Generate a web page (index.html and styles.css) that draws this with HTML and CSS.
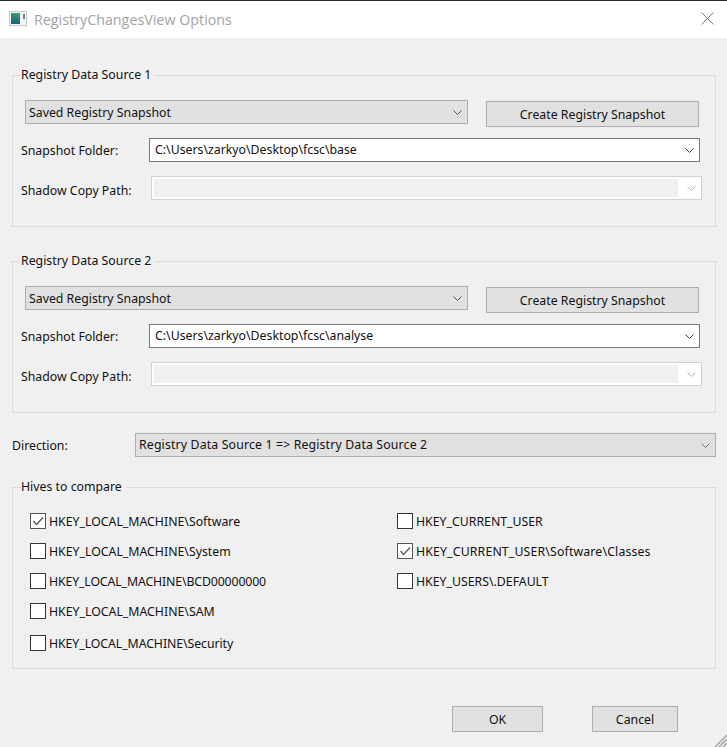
FILE: index.html
```html
<!DOCTYPE html>
<html lang="en">
<head>
<meta charset="utf-8">
<title>RegistryChangesView Options</title>
<link rel="stylesheet" href="styles.css">
</head>
<body>
<div class="dialog">
  <header class="titlebar">
    <svg class="app-icon" width="18" height="15" viewBox="0 0 18 15">
      <defs><linearGradient id="iconfill" x1="0" y1="0" x2="0" y2="1"><stop offset="0" stop-color="#3f9a70"/><stop offset="1" stop-color="#1d5f86"/></linearGradient></defs>
      <rect x="0" y="0" width="18" height="15" fill="#c4cad0"/>
      <rect x="1" y="1" width="16" height="13" fill="#f2f4f6"/>
      <rect x="2" y="2" width="9" height="11" fill="url(#iconfill)"/>
      <rect x="14" y="3" width="2" height="5" fill="#6e8296"/>
    </svg>
    <span class="title">RegistryChangesView Options</span>
    <svg class="close" width="13" height="13" viewBox="0 0 13 13"><path d="M0.5 0.5L12.5 12.5M12.5 0.5L0.5 12.5" stroke="#7a7a7a" stroke-width="1" fill="none"/></svg>
  </header>
  <main class="content">
    <fieldset class="group source">
      <legend>Registry Data Source 1</legend>
      <div class="row row-source">
        <div class="combo combo-source"><span>Saved Registry Snapshot</span><svg class="chev" width="9" height="5" viewBox="0 0 9 5"><path d="M0.5 0.5L4.5 4.5L8.5 0.5" stroke="#505050" fill="none"/></svg></div>
        <button class="btn btn-create" type="button">Create Registry Snapshot</button>
      </div>
      <div class="row row-folder">
        <label class="field-label">Snapshot Folder:</label>
        <div class="combo combo-edit"><span>C:\Users\zarkyo\Desktop\fcsc\base</span><svg class="chev" width="9" height="5" viewBox="0 0 9 5"><path d="M0.5 0.5L4.5 4.5L8.5 0.5" stroke="#404040" fill="none"/></svg></div>
      </div>
      <div class="row row-shadow">
        <label class="field-label">Shadow Copy Path:</label>
        <div class="combo combo-disabled"><span class="inner"></span><svg class="chev" width="9" height="5" viewBox="0 0 9 5"><path d="M0.5 0.5L4.5 4.5L8.5 0.5" stroke="#b4b4b4" fill="none"/></svg></div>
      </div>
    </fieldset>
    <fieldset class="group source second">
      <legend>Registry Data Source 2</legend>
      <div class="row row-source">
        <div class="combo combo-source"><span>Saved Registry Snapshot</span><svg class="chev" width="9" height="5" viewBox="0 0 9 5"><path d="M0.5 0.5L4.5 4.5L8.5 0.5" stroke="#505050" fill="none"/></svg></div>
        <button class="btn btn-create" type="button">Create Registry Snapshot</button>
      </div>
      <div class="row row-folder">
        <label class="field-label">Snapshot Folder:</label>
        <div class="combo combo-edit"><span>C:\Users\zarkyo\Desktop\fcsc\analyse</span><svg class="chev" width="9" height="5" viewBox="0 0 9 5"><path d="M0.5 0.5L4.5 4.5L8.5 0.5" stroke="#404040" fill="none"/></svg></div>
      </div>
      <div class="row row-shadow">
        <label class="field-label">Shadow Copy Path:</label>
        <div class="combo combo-disabled"><span class="inner"></span><svg class="chev" width="9" height="5" viewBox="0 0 9 5"><path d="M0.5 0.5L4.5 4.5L8.5 0.5" stroke="#b4b4b4" fill="none"/></svg></div>
      </div>
    </fieldset>
    <div class="direction">
      <label class="direction-label">Direction:</label>
      <div class="combo combo-direction"><span class="wide">Registry Data Source 1 =&gt; Registry Data Source 2</span><svg class="chev" width="9" height="5" viewBox="0 0 9 5"><path d="M0.5 0.5L4.5 4.5L8.5 0.5" stroke="#707070" fill="none"/></svg></div>
    </div>
    <fieldset class="group hives">
      <legend>Hives to compare</legend>
      <div class="hive-grid">
        <div class="hive-col col-left">
          <div class="check"><span class="box on"><svg width="14" height="14" viewBox="0 0 14 14"><path d="M2.5 7L5.5 10.5L12 3.5" stroke="#555" stroke-width="1.2" fill="none"/></svg></span>HKEY_LOCAL_MACHINE\Software</div>
          <div class="check"><span class="box"></span>HKEY_LOCAL_MACHINE\System</div>
          <div class="check narrow"><span class="box"></span>HKEY_LOCAL_MACHINE\BCD00000000</div>
          <div class="check"><span class="box"></span>HKEY_LOCAL_MACHINE\SAM</div>
          <div class="check last tight"><span class="box"></span>HKEY_LOCAL_MACHINE\Security</div>
        </div>
        <div class="hive-col col-right">
          <div class="check"><span class="box"></span>HKEY_CURRENT_USER</div>
          <div class="check wide"><span class="box on"><svg width="14" height="14" viewBox="0 0 14 14"><path d="M2.5 7L5.5 10.5L12 3.5" stroke="#555" stroke-width="1.2" fill="none"/></svg></span>HKEY_CURRENT_USER\Software\Classes</div>
          <div class="check"><span class="box"></span>HKEY_USERS\.DEFAULT</div>
        </div>
      </div>
    </fieldset>
    <footer class="actions">
      <button class="btn btn-ok" type="button">OK</button>
      <button class="btn btn-cancel" type="button">Cancel</button>
    </footer>
    <svg class="grip" width="13" height="13" viewBox="0 0 13 13"><path d="M13 1L1 13M13 5L5 13M13 9L9 13" stroke="#a0a0a0" stroke-width="1.4" fill="none"/></svg>
  </main>
</div>
</body>
</html>
```
FILE: styles.css
```css
* { box-sizing: border-box; }
html, body { margin: 0; padding: 0; }
body {
  width: 727px;
  height: 747px;
  overflow: hidden;
  background: #f0f0f0;
  font-family: "Noto Sans", "Open Sans", sans-serif;
  font-size: 12.3px;
  color: #111;
}
.dialog { display: flex; flex-direction: column; height: 747px; }
.titlebar {
  height: 38px;
  flex: none;
  background: #fff;
  border-top: 1px solid #2b2b2b;
  display: flex;
  align-items: center;
  padding: 0 13px 2px 9px;
}
.app-icon { flex: none; margin-right: 7px; }
.title { flex: 1; padding-top: 2px; font-size: 14.3px; color: #a3a3a3; font-family: "Open Sans", "Noto Sans", sans-serif; }
.close { flex: none; }
.content { position: relative; flex: 1; padding: 29px 11px 0 12px; }

.group {
  margin: 0;
  min-width: 0;
  border: 1px solid #dcdcdc;
  padding: 0;
  height: 160px;
}
.group legend { margin-left: 8px; padding: 0; height: 16px; line-height: 16px; padding-right: 4px; }
.source.second { margin-top: 26px; }

.row { display: flex; align-items: center; }
.row-source { padding: 17px 16px 0 12px; height: 45px; align-items: flex-start; justify-content: space-between; }
.row-folder { margin-top: 10px; padding-left: 8px; }
.row-shadow { margin-top: 14px; padding-left: 8px; }
.field-label { flex: none; }
.row-folder .field-label { width: 128px; padding-top: 1px; }
.row-shadow .field-label { width: 130px; padding-top: 4px; }

.combo {
  height: 24px;
  display: flex;
  align-items: center;
  justify-content: space-between;
  padding: 0 5px 0 3px;
  border: 1px solid #adadad;
  background: #e1e1e1;
  line-height: 20px;
}
.combo-source { width: 443px; }
.combo-source span { padding-top: 1px; }
.combo-edit { width: 551px; background: #fff; border-color: #7a7a7a; padding-left: 5px; }
.combo-disabled { width: 551px; background: #fff; border-color: #d2d2d2; padding: 2px 5px 2px 2px; }
.combo-disabled .inner { width: 524px; height: 18px; background: #f0f0f0; }
.combo-direction { flex: 1; }
.chev { flex: none; }
.wide { letter-spacing: 0.15px; }
.narrow { letter-spacing: -0.13px; }
.tight { letter-spacing: -0.07px; }

.btn {
  font: inherit;
  color: #111;
  background: #e1e1e1;
  border: 1px solid #adadad;
  padding: 0;
  height: 26px;
  border-radius: 0;
}
.btn-create { width: 213px; margin-top: 1px; }
.btn-ok { width: 91px; }
.btn-cancel { width: 86px; margin-left: 49px; }

.direction { display: flex; align-items: center; margin-top: 20px; }
.direction-label { flex: none; width: 123px; }

.hives { margin-top: 22px; height: 190px; }
.hive-grid { display: flex; padding: 18px 0 0 17px; }
.col-left { width: 367px; }
.check { display: flex; align-items: center; height: 16px; margin-bottom: 14px; white-space: nowrap; }
.check.last { margin-top: 16px; }
.box {
  flex: none;
  width: 16px;
  height: 16px;
  margin-right: 3px;
  border: 1px solid #333;
  background: #fff;
  display: flex;
  align-items: center;
  justify-content: center;
}
.box.on { border-color: #555; }
.actions { display: flex; padding: 37px 0 0 440px; }
.grip { position: absolute; right: 0; bottom: 0; }
```
